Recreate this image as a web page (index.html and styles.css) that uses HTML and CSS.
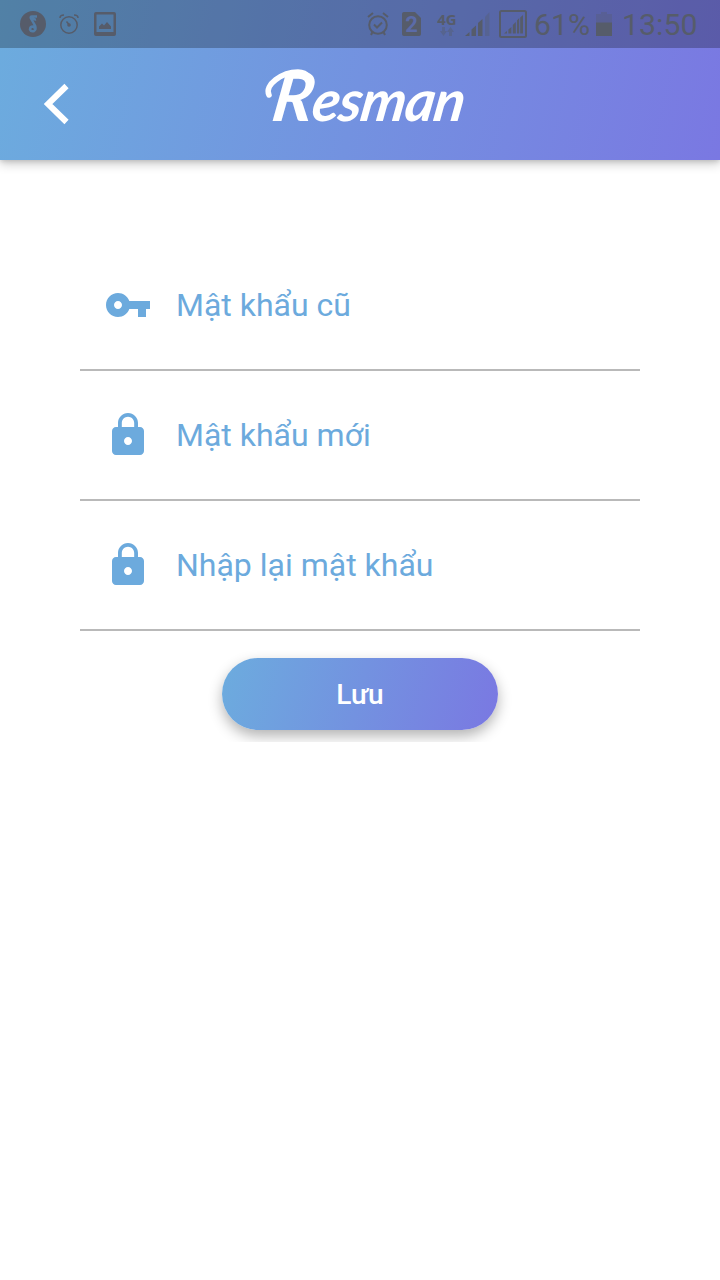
FILE: index.html
```html
<!DOCTYPE html>
<html lang="vi">
<head>
<meta charset="utf-8">
<title>Resman</title>
<link rel="stylesheet" href="styles.css">
</head>
<body>
<header class="header">
  <div class="status">
    <div class="status-left">
      <svg class="ic-note" width="28" height="28" viewBox="0 0 28 28"><circle cx="14" cy="14" r="13" fill="currentColor"/><path d="M18 6.500h-5q-2 0-1 2l4 7q1.500 4-1 5.500-3 1-4-1.500 0-3 3-3 2 .5 1.500 2.500M12 7q3 3 5 2.500" fill="none" stroke="#527ca5" stroke-width="2.500"/></svg>
      <svg width="20" height="22" viewBox="0 0 20 22" fill="none" stroke="currentColor" stroke-width="1.500"><circle cx="10" cy="12" r="8.200"/><path d="M1 5q0-3 4-3M19 5q0-3-4-3"/><path d="M7.500 8.500l2.500 3" stroke-width="1.500"/><circle cx="10" cy="12" r="1.800" fill="currentColor" stroke="none"/></svg>
      <svg class="ic-photo" width="22" height="24" viewBox="0 0 22 24"><path fill="currentColor" fill-rule="evenodd" d="M2 0h18q2 0 2 2v20q0 2-2 2H2q-2 0-2-2V2q0-2 2-2zm.5 2.500V20h17V2.500zM5 17v-2.500l3-3 2 2 3-3.500 4 4.500V17z"/></svg>
    </div>
    <div class="status-right">
      <svg width="22" height="24" viewBox="0 0 22 24" fill="none" stroke="currentColor" stroke-width="2"><circle cx="11" cy="13" r="8.800"/><path d="M1 5l5-4M21 5l-5-4M7 12.500l3 3 5-5M5.500 20L4 23M16.500 20l1.500 3"/></svg>
      <svg class="ic-sim" width="19" height="24" viewBox="0 0 19 24"><path d="M2 0h11l6 6v16q0 2-2 2H2q-2 0-2-2V2q0-2 2-2z" fill="currentColor"/><text class="sim-number" x="9.500" y="19.500" text-anchor="middle">2</text></svg>
      <div class="network"><span>4G</span><svg width="14" height="9" viewBox="0 0 14 9"><path d="M2 0h3v4h2L3.500 9 0 4h2zM9 9h3V5h2l-3.500-5L7 5h2z" fill="currentColor" opacity=".4"/></svg></div>
      <svg class="ic-signal" width="25" height="24" viewBox="0 0 25 24" fill="currentColor"><path d="M0 24l4.500-4v4zM6.500 17.500l4.500-4V24H6.500zM13 11l4.500-4v17H13z"/><path d="M20 5l4.500-5v24H20z" opacity=".35"/></svg>
      <svg class="ic-signal-box" width="28" height="28" viewBox="0 0 28 28"><rect x="1" y="1" width="26" height="26" rx="1.500" fill="none" stroke="currentColor" stroke-width="2"/><path fill="currentColor" d="M5 23.500l3-2.500v2.500zM9.400 19.500l3-2.500v6.500h-3zM13.800 15l3-3v11.500h-3zM18 10.500l2.200-2.500v15.500H18zM21.200 7.500L24 5v18.500h-2.800z"/></svg>
      <span class="battery-text">61%</span>
      <svg class="ic-battery" width="16" height="24" viewBox="0 0 16 24" fill="currentColor"><path d="M0 2h5V0h6v2h5v9H0z" opacity=".3"/><path d="M0 10.500h16V24H0z"/></svg>
      <span class="clock">13:50</span>
    </div>
  </div>
  <div class="toolbar">
    <svg class="back" width="26" height="42" viewBox="0 0 26 42"><path d="M22.500 3L4 21l18.500 18" fill="none" stroke="currentColor" stroke-width="6"/></svg>
    <div class="logo">
      <svg class="flourish" width="54" height="34" viewBox="0 0 54 34"><path d="M5 26C0 16 18 3 34 3q7 0 11 5" fill="none" stroke="currentColor" stroke-width="5.500" stroke-linecap="round"/></svg>
      <h1 class="brand"><span class="brand-initial">R</span>esman</h1>
    </div>
  </div>
</header>
<main class="form">
  <label class="field">
    <svg class="field-icon" viewBox="0 0 24 24"><path d="M12.650 10C11.830 7.670 9.610 6 7 6c-3.310 0-6 2.690-6 6s2.690 6 6 6c2.610 0 4.830-1.670 5.650-4H17v4h4v-4h2v-4H12.650zM7 14c-1.100 0-2-.9-2-2s.9-2 2-2 2 .9 2 2-.9 2-2 2z"/></svg>
    <span>Mật khẩu cũ</span>
  </label>
  <label class="field">
    <svg class="field-icon" viewBox="0 0 24 24"><path d="M18 8h-1V6c0-2.760-2.240-5-5-5S7 3.240 7 6v2H6c-1.100 0-2 .9-2 2v10c0 1.100.9 2 2 2h12c1.100 0 2-.9 2-2V10c0-1.100-.9-2-2-2zm-6 9c-1.100 0-2-.9-2-2s.9-2 2-2 2 .9 2 2-.9 2-2 2zm3.100-9H8.900V6c0-1.710 1.390-3.100 3.100-3.100s3.100 1.390 3.100 3.100v2z"/></svg>
    <span>Mật khẩu mới</span>
  </label>
  <label class="field">
    <svg class="field-icon" viewBox="0 0 24 24"><path d="M18 8h-1V6c0-2.760-2.240-5-5-5S7 3.240 7 6v2H6c-1.100 0-2 .9-2 2v10c0 1.100.9 2 2 2h12c1.100 0 2-.9 2-2V10c0-1.100-.9-2-2-2zm-6 9c-1.100 0-2-.9-2-2s.9-2 2-2 2 .9 2 2-.9 2-2 2zm3.100-9H8.900V6c0-1.710 1.390-3.100 3.100-3.100s3.100 1.390 3.100 3.100v2z"/></svg>
    <span>Nhập lại mật khẩu</span>
  </label>
  <div class="actions"><button class="save" type="button">Lưu</button></div>
</main>
</body>
</html>
```
FILE: styles.css
```css
* { box-sizing: border-box; }
body {
  margin: 0;
  min-height: 1280px;
  background: #fff;
  font-family: Roboto, "Noto Sans", sans-serif;
}
.header {
  height: 160px;
  background: linear-gradient(102.5deg, #6cacde, #7a78e2);
  box-shadow: 0 4px 10px rgba(0, 0, 0, .2), 0 1px 5px rgba(0, 0, 0, .15);
}
.status {
  height: 48px;
  display: flex;
  align-items: center;
  justify-content: space-between;
  padding: 0 24px 0 19px;
  background: rgba(0, 0, 0, .25);
  color: #565c6a;
}
.status-left, .status-right { display: flex; align-items: center; }
.ic-note { margin-right: 12px; }
.ic-photo { margin-left: 15px; }
.ic-sim { margin-left: 13px; }
.sim-number { font: 700 22px Roboto, sans-serif; fill: #5b6ba8; }
.network {
  display: flex;
  flex-direction: column;
  align-items: center;
  width: 20px;
  margin-left: 16px;
  font: 700 15px/15px "Noto Sans", sans-serif;
}
.ic-signal { margin-left: 8px; }
.ic-signal-box { margin-left: 9px; }
.battery-text, .clock { font-size: 30.300px; line-height: 48px; padding-top: 1px; white-space: nowrap; }
.battery-text { width: 58px; margin-left: 7px; }
.ic-battery { margin-left: 4px; }
.clock { width: 74px; margin-left: 10px; }
.toolbar {
  height: 112px;
  display: flex;
  align-items: center;
  padding-left: 44px;
  color: #fff;
}
.logo {
  position: relative;
  margin: 0 0 16px 204px;
}
.flourish {
  position: absolute;
  left: -10px;
  top: 15px;
}
.brand {
  width: 192px;
  margin: 0;
  padding-top: 1px;
  font: italic 700 57px/80px Lato, sans-serif;
  letter-spacing: -1px;
  white-space: nowrap;
  transform: skewX(-9deg);
  transform-origin: left center;
}
.brand-initial { font-size: 68px; }
.form { padding: 80px 80px 0; }
.field {
  height: 130px;
  display: flex;
  align-items: center;
  padding: 0 24px 0;
  border-bottom: 2px solid #b9b9b9;
  color: #6caadd;
  font-size: 32px;
}
.field:first-child { height: 131px; }
.field-icon { width: 48px; height: 48px; margin-right: 24px; fill: currentColor; }
.actions {
  height: 111px;
  display: flex;
  justify-content: center;
  align-items: flex-start;
  padding-top: 27px;
  overflow: hidden;
}
.save {
  width: 276px;
  height: 72px;
  border: 0;
  border-radius: 36px;
  background: linear-gradient(104.6deg, #6cacde, #7a78e2);
  box-shadow: 0 6px 14px rgba(0, 0, 0, .3);
  color: #fff;
  font: 500 28px Roboto, "Noto Sans", sans-serif;
}
```
